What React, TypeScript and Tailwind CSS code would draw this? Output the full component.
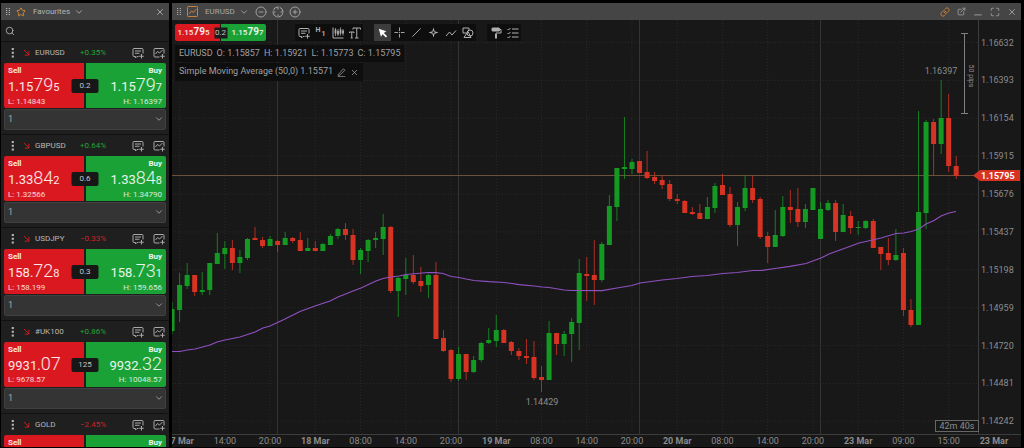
import type { ReactNode } from "react";
import {
  ChevronDown,
  CircleMinus,
  CirclePlus,
  ExternalLink,
  Link as LinkIcon,
  Maximize,
  Search,
  Star,
  X,
} from "lucide-react";

type Quote = {
  symbol: string;
  change: string;
  spread?: string;
  sell?: string[];
  buy?: string[];
  low?: string;
  high?: string;
};

const quotes: Quote[] = [
  { symbol: "EURUSD", change: "+0.35%", sell: ["1.15", "79", "5"], buy: ["1.15", "79", "7"], low: "1.14843", high: "1.16397", spread: "0.2" },
  { symbol: "GBPUSD", change: "+0.64%", sell: ["1.33", "84", "2"], buy: ["1.33", "84", "8"], low: "1.32566", high: "1.34790", spread: "0.6" },
  { symbol: "USDJPY", change: "−0.33%", sell: ["158.", "72", "8"], buy: ["158.", "73", "1"], low: "158.199", high: "159.656", spread: "0.3" },
  { symbol: "#UK100", change: "+0.86%", sell: ["9931.", "07"], buy: ["9932.", "32"], low: "9678.57", high: "10048.57", spread: "125" },
  { symbol: "GOLD", change: "−2.45%" },
];

// up, high, body top, body bottom, low
const candles = [
  [1, 302, 309, 331, 334], [1, 273, 285, 310, 322], [1, 263, 275, 286, 289], [0, 275, 275, 292, 296],
  [1, 272, 290, 292, 295], [1, 263, 263, 290, 295], [1, 233, 253, 264, 264], [1, 241, 248, 254, 269],
  [0, 240, 248, 263, 270], [1, 250, 257, 263, 273], [1, 238, 239, 258, 260], [0, 227, 238, 240, 240],
  [0, 237, 240, 246, 248], [1, 236, 239, 246, 246], [0, 240, 241, 245, 252], [1, 232, 238, 245, 245],
  [0, 237, 238, 241, 243], [0, 232, 240, 251, 251], [1, 238, 248, 251, 251], [0, 241, 248, 251, 251],
  [1, 243, 244, 251, 251], [1, 234, 236, 245, 245], [1, 228, 229, 236, 239], [0, 223, 229, 235, 240],
  [0, 229, 235, 260, 265], [1, 248, 250, 260, 274], [1, 239, 240, 251, 262], [1, 232, 238, 240, 248],
  [1, 214, 227, 239, 255], [0, 226, 227, 291, 293], [1, 277, 278, 291, 317], [1, 258, 275, 279, 295],
  [0, 255, 275, 282, 284], [0, 267, 281, 286, 292], [1, 274, 275, 285, 298], [0, 262, 275, 339, 339],
  [0, 330, 338, 351, 352], [0, 349, 350, 379, 382], [1, 347, 354, 379, 381], [0, 354, 354, 372, 380],
  [1, 356, 360, 372, 373], [1, 342, 343, 360, 362], [1, 328, 340, 343, 344], [1, 315, 330, 341, 347],
  [0, 329, 330, 343, 343], [0, 341, 342, 351, 355], [0, 348, 351, 356, 360], [0, 339, 356, 358, 364],
  [0, 341, 357, 378, 380], [0, 366, 377, 380, 392], [1, 321, 333, 380, 380], [0, 333, 333, 344, 355],
  [1, 331, 334, 344, 356], [1, 318, 322, 334, 362], [1, 259, 273, 323, 350], [0, 257, 274, 276, 301],
  [0, 240, 275, 280, 305], [1, 242, 244, 280, 282], [1, 195, 206, 245, 245], [1, 168, 168, 207, 221],
  [1, 117, 167, 169, 179], [1, 159, 162, 169, 174], [0, 161, 161, 173, 173], [0, 151, 172, 178, 179],
  [0, 172, 177, 181, 184], [0, 175, 180, 185, 189], [0, 180, 184, 199, 201], [0, 194, 199, 201, 204],
  [0, 200, 201, 213, 213], [0, 207, 212, 214, 215], [0, 204, 213, 219, 219], [1, 197, 207, 219, 219],
  [1, 183, 186, 208, 213], [0, 174, 185, 195, 195], [0, 187, 194, 225, 227], [1, 202, 207, 225, 246],
  [1, 175, 188, 208, 211], [0, 176, 188, 200, 203], [0, 197, 199, 237, 239], [0, 232, 236, 247, 263],
  [1, 210, 235, 247, 247], [1, 196, 207, 236, 237], [0, 190, 207, 210, 223], [0, 188, 209, 222, 227],
  [1, 204, 209, 222, 228], [1, 188, 188, 210, 210], [1, 202, 209, 239, 239], [1, 200, 203, 210, 211],
  [0, 200, 203, 232, 241], [1, 204, 215, 232, 232], [0, 211, 216, 228, 234], [1, 221, 227, 228, 235],
  [1, 220, 221, 228, 229], [0, 219, 221, 248, 248], [0, 247, 247, 254, 270], [0, 238, 253, 260, 265],
  [1, 229, 255, 260, 261], [0, 248, 253, 310, 316], [0, 299, 310, 325, 327], [1, 111, 212, 325, 325],
  [1, 120, 122, 213, 229], [0, 119, 122, 144, 175], [1, 80, 118, 144, 154], [0, 94, 118, 166, 172],
  [0, 156, 166, 176, 179],
];

const sma =
  "172,351.5 180,351.5 187,350 195,349 210,345 217,342 225,340 240,337 255,332 263,328 270,326 285,319 300,311.5 315,306 330,301 338,297 353,291 361,288 376,281 383,278.5 391,277 399,276 406,274.5 428,272.5 436,272.7 443,273.5 451,276.5 459,277.5 466,279 474,280.5 489,281.7 504,282.5 512,283.5 519,284.7 534,286 542,287 549,287.5 564,290 571,290.5 602,290.7 617,288 632,285.5 640,283 662,280 677,278.5 692,276.5 707,275.5 723,273.5 737,272.5 753,270.5 761,270.5 775,268.5 790,266.3 806,263.5 821,258 829,254 851,246 859,243 866,241.5 881,238 896,233.5 904,233 911,231.5 919,229 926,224 934,220.5 941,216 949,213 956,211.5";

const prices = [
  "1.16632", "1.16393", "1.16154", "1.15915", "1.15676", "1.15437",
  "1.15198", "1.14959", "1.14720", "1.14481", "1.14242",
];

const times = [
  "17 Mar", "14:00", "20:00", "18 Mar", "08:00", "14:00", "20:00", "19 Mar", "08:00",
  "14:00", "20:00", "20 Mar", "08:00", "14:00", "20:00", "23 Mar", "09:00", "15:00", "23 Mar",
];

const dayLines = [277.5, 458.5, 639.5, 820.5];

const candleX = (i: number) => 179.6 + (i - 1) * 7.54;
const timeX = (i: number) => 179.6 + i * 45.24;
const priceY = (i: number) => 42.5 + i * 37.88;

function Icon({ children, className = "size-3" }: { children: ReactNode; className?: string }) {
  return (
    <svg
      viewBox="0 0 24 24"
      fill="none"
      stroke="currentColor"
      strokeWidth="2"
      className={className}
      aria-hidden="true"
    >
      {children}
    </svg>
  );
}

function Grip() {
  return (
    <Icon className="w-[6px] h-[9px] shrink-0">
      {[0, 8, 16, 24].map((y) => (
        <g key={y} fill="currentColor" stroke="none">
          <rect x="4" y={y - 2} width="5" height="4" />
          <rect x="15" y={y - 2} width="5" height="4" />
        </g>
      ))}
    </Icon>
  );
}

function TicketIcon() {
  return (
    <Icon>
      <path d="M13 19H10l-3 3v-3H4a2 2 0 0 1-2-2V5a2 2 0 0 1 2-2h16a2 2 0 0 1 2 2v8" />
      <path d="M6 8h12M6 12.5h9M19 14v9M14.5 18.5h9" />
    </Icon>
  );
}

function ChartPlusIcon() {
  return (
    <Icon>
      <path d="M13 20H4a2 2 0 0 1-2-2V5a2 2 0 0 1 2-2h16a2 2 0 0 1 2 2v8" />
      <path d="M5 14l4-5 4 3 6-6M19 14v9M14.5 18.5h9" />
    </Icon>
  );
}

function Price({ parts }: { parts: string[] }) {
  return (
    <span className="text-[13px] leading-[18px]">
      {parts[0]}
      <span className="text-[18px] font-light">{parts[1]}</span>
      {parts[2] && <span className="text-[11px]">{parts[2]}</span>}
    </span>
  );
}

function QuoteCard({ quote }: { quote: Quote }) {
  return (
    <li className="h-[93px] shrink-0 border-t border-[#111] px-[3px]">
      <div className="flex h-[21px] items-center text-[8px]">
        <button aria-label="Menu" className="w-[18px] pl-1 text-[#b5b5b5]">
          <Icon className="size-[10px]">
            <g fill="currentColor" stroke="none">
              <rect x="9" y="0" width="5" height="5" />
              <rect x="9" y="9" width="5" height="5" />
              <rect x="9" y="18" width="5" height="5" />
            </g>
          </Icon>
        </button>
        <Icon className="ml-px mr-[5px] size-[7px] text-[#d8201f]">
          <path strokeWidth="3" d="M3 3l17 17M20 6v15H6" />
        </Icon>
        <span className="w-[45px] text-[#b8b8b8]">{quote.symbol}</span>
        <span className={quote.change.startsWith("+") ? "text-[#22a637]" : "text-[#c92626]"}>
          {quote.change}
        </span>
        <div className="ml-auto flex gap-[9px] pr-px text-[#a8a8a8]">
          <button aria-label="New order">
            <TicketIcon />
          </button>
          <button aria-label="New chart">
            <ChartPlusIcon />
          </button>
        </div>
      </div>
      <div className="relative grid h-[45px] grid-cols-2 gap-[2px] text-white/90">
        <button className="flex flex-col items-start rounded-l-xs bg-[#da1820] px-1 pt-[3px]">
          <span className="text-[8px] leading-[10px] font-bold">Sell</span>
          {quote.sell && <Price parts={quote.sell} />}
          {quote.low && (
            <span className="text-[8px] leading-[10px] text-white/80">L: {quote.low}</span>
          )}
        </button>
        <button className="flex flex-col items-end rounded-r-xs bg-[#1aa237] px-1 pt-[3px]">
          <span className="text-[8px] leading-[10px] font-bold">Buy</span>
          {quote.buy && <Price parts={quote.buy} />}
          {quote.high && (
            <span className="text-[8px] leading-[10px] text-white/80">H: {quote.high}</span>
          )}
        </button>
        {quote.spread && (
          <span className="absolute top-1/2 left-1/2 flex h-[14px] w-[27px] -translate-1/2 items-center justify-center rounded-xs bg-[#171717] text-[8px] text-[#c4c4c4]">
            {quote.spread}
          </span>
        )}
      </div>
      {quote.spread && (
        <div className="relative mt-px text-[#a8a8a8]">
          <select
            aria-label={`${quote.symbol} lots`}
            className="block h-[21px] w-full appearance-none rounded-xs border border-[#404040] bg-[#343434] px-[3px] text-[9px]"
          >
            <option>1</option>
          </select>
          <ChevronDown className="pointer-events-none absolute top-[5px] right-[2px] size-[10px]" />
        </div>
      )}
    </li>
  );
}

function Favourites() {
  return (
    <aside className="flex w-[168px] shrink-0 flex-col overflow-hidden bg-[#1f1f1f]">
      <header className="flex h-[17px] shrink-0 items-center bg-[#454545] pr-1 pl-1 text-[#b5b5b5]">
        <Grip />
        <Star className="ml-[5px] size-[10px] text-[#e8923a]" />
        <button className="ml-[7px] flex items-center gap-1 text-[8px]">
          Favourites
          <ChevronDown className="size-[10px]" />
        </button>
        <button aria-label="Close" className="ml-auto">
          <X className="size-[10px]" />
        </button>
      </header>
      <label className="flex h-[21px] shrink-0 items-center gap-2 px-1 text-[#b5b5b5]">
        <Search className="size-[10px]" />
        <input aria-label="Search" className="min-w-0 flex-1 bg-transparent text-[9px] outline-none" />
      </label>
      <ul className="flex min-h-0 flex-1 flex-col overflow-hidden">
        {quotes.map((q) => (
          <QuoteCard key={q.symbol} quote={q} />
        ))}
      </ul>
    </aside>
  );
}

function ChartHeader() {
  return (
    <header className="flex h-[17px] shrink-0 items-center bg-[#454545] px-1 text-[#a8a8a8]">
      <Grip />
      <Icon className="ml-[5px] size-[11px] text-[#dd8838]">
        <rect x="1" y="1" width="22" height="22" rx="2" />
        <path d="M5 17l5-6 4 3 6-7" />
      </Icon>
      <button className="ml-[7px] flex items-center gap-1 text-[8px]">
        EURUSD
        <ChevronDown className="size-[10px]" />
      </button>
      <div className="ml-[6px] flex gap-[5px]">
        <button aria-label="Zoom out">
          <CircleMinus className="size-3" strokeWidth={1.8} />
        </button>
        <button aria-label="Reset zoom">
          <Icon>
            <circle cx="12" cy="12" r="10" strokeDasharray="11 4.708" strokeDashoffset="-2.354" />
            <path d="M12 1v6M12 17v6M1 12h6M17 12h6" />
          </Icon>
        </button>
        <button aria-label="Zoom in">
          <CirclePlus className="size-3" strokeWidth={1.8} />
        </button>
      </div>
      <div className="ml-auto flex items-center gap-[7px]">
        <button aria-label="Link chart" className="text-[#dd8838]">
          <LinkIcon className="size-[10px]" />
        </button>
        <button aria-label="Open in window">
          <ExternalLink className="size-[9px]" />
        </button>
        <button aria-label="Minimise">
          <Icon className="size-[10px]">
            <path d="M3 19h18" strokeWidth="2" />
          </Icon>
        </button>
        <button aria-label="Full screen">
          <Maximize className="size-[10px]" />
        </button>
        <button aria-label="Close">
          <X className="size-[10px]" />
        </button>
      </div>
    </header>
  );
}

function Tool({ label, active, children }: { label: string; active?: boolean; children: ReactNode }) {
  return (
    <button
      aria-label={label}
      className={
        active
          ? "flex h-[17px] w-[17px] items-center justify-center bg-[#3c3c3c] text-white"
          : "flex h-[17px] w-[17px] items-center justify-center"
      }
    >
      {children}
    </button>
  );
}

function Toolbar() {
  return (
    <div className="flex items-center text-[#b0b0b0]">
      <div className="relative flex h-[17px] gap-px text-[8px] font-medium text-white/90">
        <button className="w-[45px] rounded-l-xs bg-[#da1820] pr-2 leading-[16px]">
          1.15<span className="text-[10px] font-bold">79</span>5
        </button>
        <button className="w-[45px] rounded-r-xs bg-[#1aa237] pl-2 leading-[16px]">
          1.15<span className="text-[10px] font-bold">79</span>7
        </button>
        <span className="absolute top-1/2 left-1/2 flex h-[11px] w-[13px] -translate-1/2 items-center justify-center bg-[#1b1b1b] text-[8px] font-normal text-[#c4c4c4]">
          0.2
        </span>
      </div>
      <div className="ml-[29px] flex bg-[#0e0e0e]">
        <Tool label="New order">
          <TicketIcon />
        </Tool>
        <Tool label="Timeframe">
          <span className="flex gap-px text-[7px] leading-[7px] font-bold">
            <span className="pb-1">H</span>
            <span className="pt-1">1</span>
          </span>
        </Tool>
        <Tool label="Chart type">
          <Icon>
            <path d="M2 1v21h21" />
            <path d="M7 2v16M12 4v14M17 1v16M22 4v13" strokeWidth="1.500" />
            <path d="M7 5v8M12 8v7M17 5v8M22 7v6" strokeWidth="3.500" />
          </Icon>
        </Tool>
        <Tool label="Text size">
          <Icon>
            <path d="M8 5V2h15v3M15.500 2v20M12 22h7M1 12v-2h9v2M5.500 10v12M3.500 22h4" />
          </Icon>
        </Tool>
      </div>
      <div className="ml-[11px] flex bg-[#0e0e0e]">
        <Tool label="Pointer" active>
          <Icon className="size-[10px]">
            <path d="M2 2l18 6-6 4 8 8-3 3-8-8-4 6z" fill="currentColor" stroke="none" />
          </Icon>
        </Tool>
        <Tool label="Crosshair">
          <Icon className="size-[11px]">
            <path d="M12 1v8M12 15v8M1 12h8M15 12h8M11 12h2" />
          </Icon>
        </Tool>
        <Tool label="Line">
          <Icon className="size-[11px]">
            <path d="M3 21L21 3" />
          </Icon>
        </Tool>
        <Tool label="Marker">
          <Icon className="size-[11px]">
            <path d="M12 1l2.500 8.500L23 12l-8.500 2.500L12 23l-2.500-8.500L1 12l8.500-2.500z" fill="currentColor" stroke="none" />
            <circle cx="12" cy="12" r="2.500" fill="#0e0e0e" stroke="none" />
          </Icon>
        </Tool>
        <Tool label="Polyline">
          <Icon>
            <path d="M2 18l7-8 5 6 8-9" />
          </Icon>
        </Tool>
        <Tool label="Shapes">
          <Icon>
            <path d="M9 12H2V2h12v4M12 9L4 21h14z" />
            <circle cx="16" cy="12" r="6" />
          </Icon>
        </Tool>
      </div>
      <div className="ml-[11px] flex bg-[#0e0e0e]">
        <Tool label="Theme">
          <Icon>
            <rect x="4" y="2" width="15" height="6" rx="1" fill="currentColor" />
            <path d="M19 5h3v7H12v3" />
            <path d="M12 14v9" strokeWidth="4" />
          </Icon>
        </Tool>
        <Tool label="Settings list">
          <Icon>
            <path d="M10 4h13M10 12h13M10 20h13M1 4l2 2 4-4M1 12l2 2 4-4M1 20l2 2 4-4" />
          </Icon>
        </Tool>
      </div>
    </div>
  );
}

function Chart() {
  return (
    <svg
      viewBox="172 20 849 427"
      preserveAspectRatio="xMaxYMin meet"
      className="absolute inset-0 size-full text-[9px]"
      fill="#8c8c8c"
      role="img"
      aria-label="EURUSD candlestick chart"
    >
      <g stroke="#292929" strokeDasharray="1 2">
        {prices.map((p, i) => (
          <line key={p} x1="172" x2="978" y1={priceY(i)} y2={priceY(i)} />
        ))}
        {times.slice(0, -1).map((_, i) => (
          <line key={i} x1={timeX(i)} x2={timeX(i)} y1="20" y2="434" />
        ))}
      </g>
      <g stroke="#333">
        {dayLines.map((x) => (
          <line key={x} x1={x} x2={x} y1="20" y2="434" />
        ))}
      </g>
      <path d="M172 434.500H1021M978.500 20V434" stroke="#3d3d3d" fill="none" />
      <line x1="172" x2="978" y1="175.500" y2="175.500" stroke="#6e5038" />

      {candles.map(([up, high, top, bottom, low], i) => (
        <g key={i} fill={up ? "#149a22" : "#d63323"}>
          <rect x={candleX(i) - 0.5} y={high} width="1" height={low - high} opacity="0.8" />
          <rect x={candleX(i) - 2.5} y={top} width="5" height={bottom - top} />
        </g>
      ))}
      <polyline points={sma} fill="none" stroke="#8f50c0" strokeWidth="1.200" />

      <path d="M961 33.500h7M964.500 33.500V113.500M961 113.500h7" stroke="#808080" fill="none" />
      <text transform="translate(969 76) rotate(90)" textAnchor="middle" className="text-[7px]">
        50 pips
      </text>
      <text x="941" y="74" textAnchor="middle">1.16397</text>
      <text x="542" y="405" textAnchor="middle">1.14429</text>

      {prices.map((p, i) => (
        <text key={p} x="981" y={priceY(i) + 3}>{p}</text>
      ))}
      {times.map((t, i) => (
        <text
          key={i}
          x={timeX(i)}
          y="444"
          textAnchor="middle"
          className={t.includes("Mar") ? "font-bold" : ""}
        >
          {t}
        </text>
      ))}

      <path d="M973 175.500l7-5.500h40v11h-40z" fill="#d63323" />
      <text x="981" y="179" fill="#fff" className="font-bold">1.15795</text>
      <rect x="935.500" y="420.500" width="43" height="11" fill="#181818" stroke="#666" />
      <text x="957" y="429" textAnchor="middle">42m 40s</text>
    </svg>
  );
}

export default function App() {
  return (
    <div className="flex h-screen gap-[3px] overflow-hidden bg-black pt-[3px] pr-[3px] pb-px pl-px font-['Roboto',sans-serif]">
      <Favourites />
      <main className="flex min-w-0 flex-1 flex-col bg-[#181818]">
        <ChartHeader />
        <div className="relative min-h-0 flex-1 overflow-hidden">
          <Chart />
          <div className="absolute top-1 left-[3px] flex flex-col items-start text-[9px] text-[#a0a0a0]">
            <Toolbar />
            <p className="mt-1 flex h-[17px] items-center gap-1 bg-[#0e0e0e] px-1 whitespace-nowrap">
              <span>EURUSD</span>
              <span>O: 1.15857</span>
              <span>H: 1.15921</span>
              <span>L: 1.15773</span>
              <span>C: 1.15795</span>
            </p>
            <div className="mt-px flex h-[18px] items-center gap-1 bg-[#0e0e0e] px-1 whitespace-nowrap">
              <span>Simple Moving Average (50,0) 1.15571</span>
              <button aria-label="Edit indicator">
                <Icon className="size-[9px]">
                  <path d="M3 18L17 2l4 4L8 19l-5 1zM2 23h20" />
                </Icon>
              </button>
              <button aria-label="Remove indicator">
                <X className="size-[9px]" />
              </button>
            </div>
          </div>
        </div>
      </main>
    </div>
  );
}
